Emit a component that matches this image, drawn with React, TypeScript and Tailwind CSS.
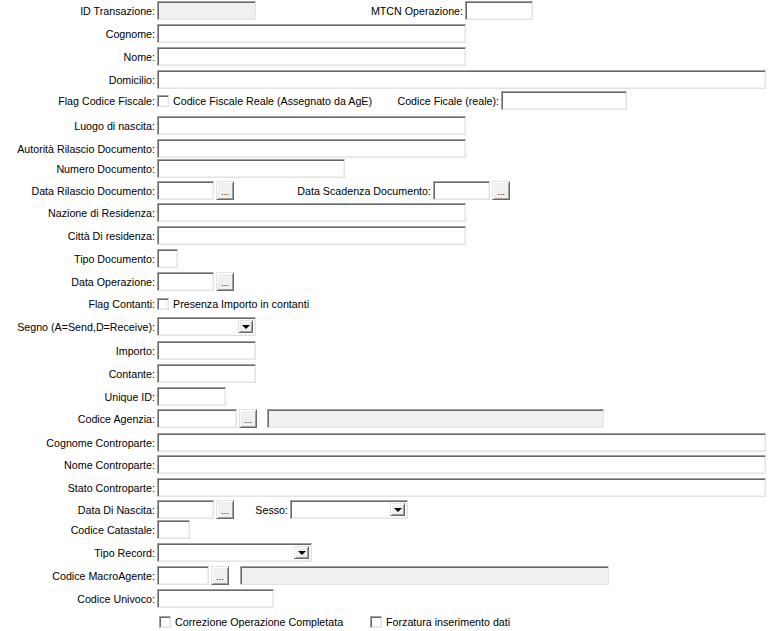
import type { ReactNode } from "react";

const sunken =
	"box-border border border-t-[#a0a0a0] border-l-[#a0a0a0] border-b-[#e3e3e3] border-r-[#e3e3e3] shadow-[inset_1px_1px_0_#696969,inset_-1px_-1px_0_#f0f0f0]";
const raised =
	"box-border border border-t-[#e3e3e3] border-l-[#e3e3e3] border-b-[#696969] border-r-[#696969] shadow-[inset_1px_1px_0_#ffffff,inset_-1px_-1px_0_#a0a0a0] bg-[#f0f0f0]";

function Label({ children, w = "w-[155px]" }: { children?: ReactNode; w?: string }) {
	return <div className={`${w} h-[19px] shrink-0 text-right leading-[20px] whitespace-nowrap`}>{children}</div>;
}

function Field({ w, gray }: { w: string; gray?: boolean }) {
	return <div className={`${w} h-[19px] shrink-0 ${sunken} ${gray ? "bg-[#f0f0f0]" : "bg-white"}`} />;
}

function Dots() {
	return (
		<div className={`w-[18px] h-[19px] shrink-0 ${raised} flex items-end justify-center pb-[2px] text-[9px] leading-none`}>
			...
		</div>
	);
}

function Select({ w }: { w: string }) {
	return (
		<div className={`${w} h-[19px] shrink-0 ${sunken} bg-white flex justify-end p-[2px]`}>
			<div className={`w-[15px] h-full ${raised} flex items-center justify-center`}>
				<div className="w-0 h-0 border-l-[4px] border-r-[4px] border-t-[4px] border-l-transparent border-r-transparent border-t-black" />
			</div>
		</div>
	);
}

function Check({ label }: { label: string }) {
	return (
		<div className="flex items-center h-[19px] whitespace-nowrap">
			<div className={`w-[12px] h-[12px] shrink-0 ${sunken} bg-white`} />
			<span className="ml-[4px] pt-[1px]">{label}</span>
		</div>
	);
}

function Row({ h, children }: { h: string; children: ReactNode }) {
	return <div className={`flex items-start gap-[2px] ${h}`}>{children}</div>;
}

export default function App() {
	return (
		<div
			className="w-[768px] h-[631px] bg-white text-black text-[10.7px] pt-[1px] overflow-hidden"
			style={{ fontFamily: '"Liberation Sans", Arial, sans-serif' }}
		>
			<Row h="h-[23px]">
				<Label>ID Transazione:</Label>
				<Field w="w-[99px]" gray />
				<Label w="w-[205px]">MTCN Operazione:</Label>
				<Field w="w-[68px]" />
			</Row>
			<Row h="h-[23px]">
				<Label>Cognome:</Label>
				<Field w="w-[309px]" />
			</Row>
			<Row h="h-[23px]">
				<Label>Nome:</Label>
				<Field w="w-[309px]" />
			</Row>
			<Row h="h-[21px]">
				<Label>Domicilio:</Label>
				<Field w="w-[609px]" />
			</Row>
			<Row h="h-[25px]">
				<Label>Flag Codice Fiscale:</Label>
				<div className="w-[342px] flex justify-between">
					<Check label="Codice Fiscale Reale (Assegnato da AgE)" />
					<Label w="w-auto">Codice Ficale (reale):</Label>
				</div>
				<Field w="w-[126px]" />
			</Row>
			<Row h="h-[23px]">
				<Label>Luogo di nascita:</Label>
				<Field w="w-[309px]" />
			</Row>
			<Row h="h-[20px]">
				<Label>Autorità Rilascio Documento:</Label>
				<Field w="w-[309px]" />
			</Row>
			<Row h="h-[22px]">
				<Label>Numero Documento:</Label>
				<Field w="w-[188px]" />
			</Row>
			<Row h="h-[22px]">
				<Label>Data Rilascio Documento:</Label>
				<Field w="w-[57px]" />
				<Dots />
				<Label w="w-[195px]">Data Scadenza Documento:</Label>
				<Field w="w-[57px]" />
				<Dots />
			</Row>
			<Row h="h-[23px]">
				<Label>Nazione di Residenza:</Label>
				<Field w="w-[309px]" />
			</Row>
			<Row h="h-[23px]">
				<Label>Città Di residenza:</Label>
				<Field w="w-[309px]" />
			</Row>
			<Row h="h-[23px]">
				<Label>Tipo Documento:</Label>
				<Field w="w-[21px]" />
			</Row>
			<Row h="h-[22px]">
				<Label>Data Operazione:</Label>
				<Field w="w-[57px]" />
				<Dots />
			</Row>
			<Row h="h-[23px]">
				<Label>Flag Contanti:</Label>
				<Check label="Presenza Importo in contanti" />
			</Row>
			<Row h="h-[24px]">
				<Label>Segno (A=Send,D=Receive):</Label>
				<Select w="w-[99px]" />
			</Row>
			<Row h="h-[23px]">
				<Label>Importo:</Label>
				<Field w="w-[99px]" />
			</Row>
			<Row h="h-[23px]">
				<Label>Contante:</Label>
				<Field w="w-[99px]" />
			</Row>
			<Row h="h-[22px]">
				<Label>Unique ID:</Label>
				<Field w="w-[69px]" />
			</Row>
			<Row h="h-[24px]">
				<Label>Codice Agenzia:</Label>
				<Field w="w-[80px]" />
				<div className="mr-[8px]">
					<Dots />
				</div>
				<Field w="w-[337px]" gray />
			</Row>
			<Row h="h-[22px]">
				<Label>Cognome Controparte:</Label>
				<Field w="w-[609px]" />
			</Row>
			<Row h="h-[23px]">
				<Label>Nome Controparte:</Label>
				<Field w="w-[609px]" />
			</Row>
			<Row h="h-[22px]">
				<Label>Stato Controparte:</Label>
				<Field w="w-[609px]" />
			</Row>
			<Row h="h-[20px]">
				<Label>Data Di Nascita:</Label>
				<Field w="w-[57px]" />
				<Dots />
				<Label w="w-[52px]">Sesso:</Label>
				<Select w="w-[118px]" />
			</Row>
			<Row h="h-[23px]">
				<Label>Codice Catastale:</Label>
				<Field w="w-[33px]" />
			</Row>
			<Row h="h-[23px]">
				<Label>Tipo Record:</Label>
				<Select w="w-[155px]" />
			</Row>
			<Row h="h-[23px]">
				<Label>Codice MacroAgente:</Label>
				<Field w="w-[52px]" />
				<div className="mr-[9px]">
					<Dots />
				</div>
				<Field w="w-[369px]" gray />
			</Row>
			<Row h="h-[23px]">
				<Label>Codice Univoco:</Label>
				<Field w="w-[117px]" />
			</Row>
			<div className="flex items-start pl-[159px] h-[23px]">
				<div className="w-[211px]">
					<Check label="Correzione Operazione Completata" />
				</div>
				<Check label="Forzatura inserimento dati" />
			</div>
		</div>
	);
}
